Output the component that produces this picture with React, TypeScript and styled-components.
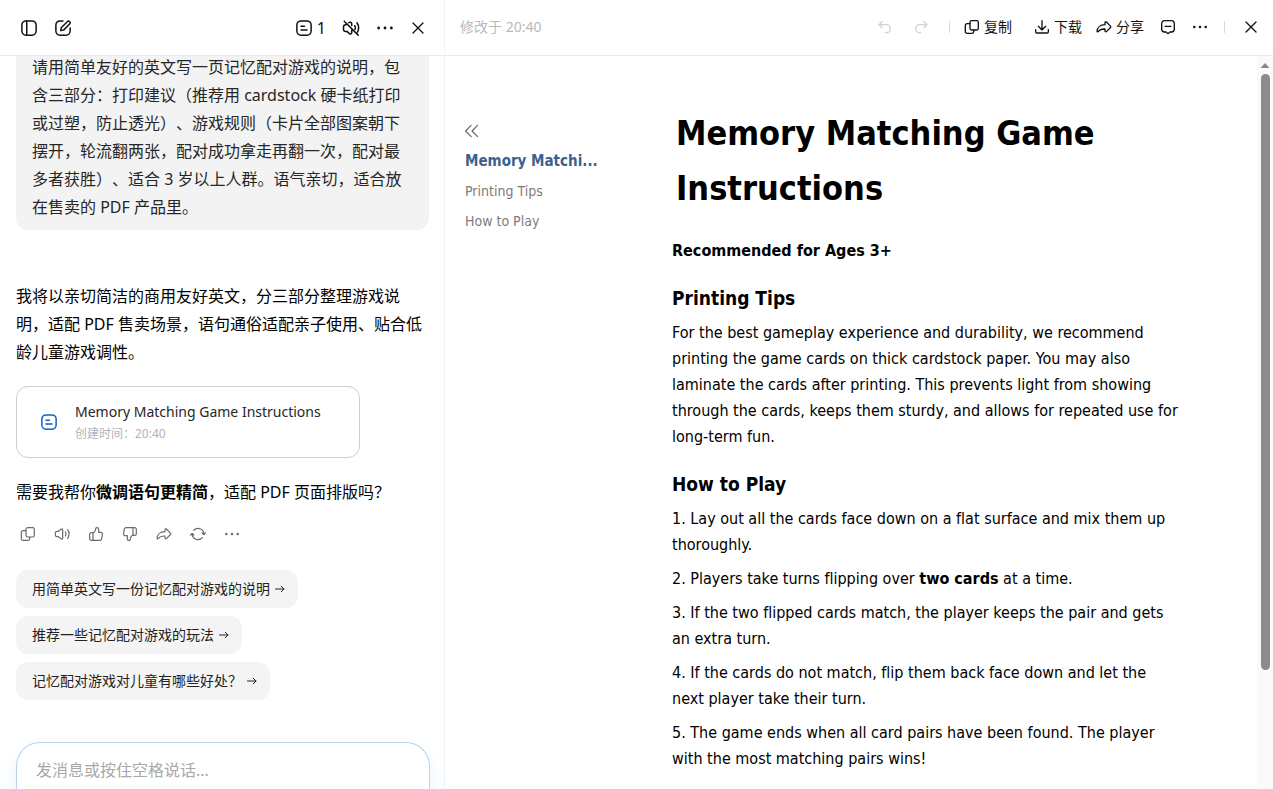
import React from "react";
import styled, { createGlobalStyle, css } from "styled-components";

const GlobalStyle = createGlobalStyle`
  * { box-sizing: border-box; }
  body { margin: 0; background: #fff; overflow: hidden; }
  button { font: inherit; color: inherit; background: none; border: 0; padding: 0; cursor: pointer; }
  h1, h2, p, ol, ul { margin: 0; padding: 0; }
`;

const uiFont = `"Noto Sans", "Noto Sans CJK SC", sans-serif`;
const docFont = `"DejaVu Sans Condensed", "DejaVu Sans", "Noto Sans CJK SC", sans-serif`;

const Page = styled.div`
  display: flex;
  height: 100vh;
  font-family: ${uiFont};
  color: #000;
  text-spacing-trim: space-all;
`;

const ChatPanel = styled.section`
  display: flex;
  flex-direction: column;
  flex: 444 1 0;
  min-width: 0;
  border-right: 1px solid #f2f2f2;
`;

const DocPanel = styled.section`
  display: flex;
  flex-direction: column;
  flex: 828 1 0;
  min-width: 0;
`;

const Bar = styled.header`
  display: flex;
  align-items: center;
  justify-content: space-between;
  flex: none;
  height: 56px;
  border-bottom: 1px solid #e9e9e9;
`;

const ChatBar = styled(Bar)`
  padding: 0 18px 0 20px;
`;

const DocBar = styled(Bar)`
  padding: 0 14px 2px 15px;
`;

const Group = styled.div<{ $gap: number }>`
  display: flex;
  align-items: center;
  gap: ${(p) => p.$gap}px;
`;

const IconButton = styled.button<{ $muted?: boolean }>`
  display: inline-flex;
  align-items: center;
  gap: 4px;
  color: #111;
  white-space: nowrap;
  ${(p) => p.$muted && css`color: #d2d2d2;`}
`;

const CountButton = styled(IconButton)`
  font-size: 16px;
`;

const TextButton = styled(IconButton)`
  font-size: 14px;
  line-height: 20px;
`;

const Saved = styled.span`
  font-size: 14px;
  line-height: 20px;
  color: #b9b9b9;
`;

const Separator = styled.span`
  width: 1px;
  height: 12px;
  background: #d8d8d8;
`;

const Messages = styled.div`
  display: flex;
  flex-direction: column;
  justify-content: flex-end;
  align-items: flex-start;
  flex: 1;
  min-height: 0;
  overflow: hidden;
  padding: 0 15px 42px 16px;
  font-size: 16px;
  line-height: 28px;
`;

const Bubble = styled.p`
  flex: none;
  margin-bottom: 52px;
  padding: 9px 16px;
  border-radius: 12px;
  background: #f3f3f3;
  color: #262626;
`;

const Reply = styled.p`
  flex: none;
`;

const FileCard = styled.button`
  display: flex;
  align-items: center;
  gap: 17px;
  flex: none;
  width: 344px;
  max-width: 100%;
  height: 72px;
  margin: 20px 0;
  padding: 0 23px;
  border: 1px solid #cfcfcf;
  border-radius: 12px;
  text-align: left;
  color: #0f62c0;
`;

const FileText = styled.span`
  display: flex;
  flex-direction: column;
`;

const FileName = styled.span`
  font-size: 14px;
  line-height: 24px;
  color: #262626;
`;

const FileTime = styled.span`
  font-size: 12px;
  line-height: 20px;
  color: #b3b3b3;
`;

const Actions = styled.div`
  display: flex;
  flex: none;
  gap: 18px;
  margin: 20px 0 28px 4px;
`;

const ActionButton = styled(IconButton)`
  color: #6b6b6b;
`;

const Suggestions = styled.ul`
  display: flex;
  flex-direction: column;
  align-items: flex-start;
  flex: none;
  gap: 8px;
  list-style: none;
`;

const Suggestion = styled.button`
  display: flex;
  align-items: center;
  gap: 4px;
  height: 38px;
  padding: 0 12px 0 16px;
  border-radius: 12px;
  background: #f4f4f4;
  color: #222;
  font-size: 14px;
  line-height: 20px;
`;

const Composer = styled.div`
  flex: none;
  margin: 0 14px 0 16px;
  height: 47px;
  padding: 13px 19px 0;
  border: 1px solid #b9d3ec;
  border-bottom: 0;
  border-radius: 24px 24px 0 0;
  box-shadow: 0 12px 20px rgba(120, 190, 250, 0.2);
`;

const ComposerInput = styled.input`
  display: block;
  width: 100%;
  height: 28px;
  padding: 0;
  border: 0;
  outline: 0;
  background: transparent;
  font-family: inherit;
  font-size: 16px;
  &::placeholder { color: #a8a8a8; opacity: 1; }
`;

const DocBody = styled.div`
  display: flex;
  flex: 1;
  min-height: 0;
  font-family: ${docFont};
  font-variant-ligatures: none;
`;

const Outline = styled.nav`
  flex: none;
  width: 227px;
  padding: 66px 60px 0 20px;
`;

const Collapse = styled.button`
  display: block;
  height: 20px;
  margin-bottom: 4px;
  color: #666;
`;

const OutlineLink = styled.a<{ $active?: boolean }>`
  display: block;
  white-space: nowrap;
  text-decoration: none;
  font-size: ${(p) => (p.$active ? 15 : 14)}px;
  line-height: 30px;
  color: ${(p) => (p.$active ? "#3b618c" : "#7d7d7d")};
  font-weight: ${(p) => (p.$active ? 700 : 400)};
`;

const Article = styled.article`
  flex: 0 1 510px;
  min-width: 0;
  padding-top: 50px;
  overflow: hidden;
  font-size: 16px;
  line-height: 26px;
`;

const Title = styled.h1`
  padding-left: 4px;
  margin-bottom: 22px;
  font-size: 34px;
  line-height: 55px;
`;

const Heading = styled.h2`
  margin: 21px 0 9px;
  font-size: 19px;
  line-height: 26px;
`;

const Steps = styled.ol`
  display: flex;
  flex-direction: column;
  gap: 8px;
  list-style: none;
`;

const ScrollTrack = styled.div`
  display: flex;
  flex-direction: column;
  align-items: center;
  flex: none;
  width: 16px;
  margin-left: auto;
  padding: 6px 0 119px;
  gap: 5px;
  background: #fafafa;
  color: #888;
`;

const ScrollThumb = styled.div`
  flex: 1;
  width: 9px;
  border-radius: 5px;
  background: #8b8b8b;
`;

const icons = {
  sidebar: (
    <>
      <rect x="2.5" y="2.5" width="19" height="19" rx="5.5" />
      <path d="M9 2.5v19" />
    </>
  ),
  edit: (
    <>
      <path d="M12 2.5H8A5.500 5.500 0 0 0 2.500 8v8A5.500 5.500 0 0 0 8 21.500h8a5.500 5.500 0 0 0 5.500-5.500v-4" />
      <path d="M9 15.500l.6-3.900 8.400-8.300a1.700 1.700 0 0 1 2.500 0l.6.6a1.700 1.700 0 0 1 0 2.500l-8.300 8.400z" />
    </>
  ),
  doc: (
    <>
      <rect x="2.500" y="2.500" width="19" height="19" rx="5.500" />
      <path d="M8 9.500h4.500M8 14.500h8" />
    </>
  ),
  mute: (
    <path d="M5.500 7.500H5A3 3 0 0 0 2 10.500v3A3 3 0 0 0 5 16.500h1.500l3.500 3c1.200 1 3 .3 3-1.500v-3M9 5c1.500-1.300 4-1 4 1.200v2.300M17 9c.9 1.500.9 3.500.3 5M20 5c2.400 3.600 2.600 8.800.6 12.500M3 3l18.500 18.500" />
  ),
  speaker: (
    <path d="M13 5.500v13c0 1-1 1.500-1.800.9L6.500 16H4.500A2.500 2.500 0 0 1 2 13.500v-3A2.500 2.500 0 0 1 4.500 8h2l4.700-3.400c.8-.6 1.800-.1 1.800.9zM17 9c1.200 1.800 1.200 4.200 0 6M20.500 5.500c2.400 3.800 2.400 9.200 0 13" />
  ),
  dots: (
    <g fill="currentColor" stroke="none">
      <circle cx="3.500" cy="12" r="1.900" />
      <circle cx="12" cy="12" r="1.900" />
      <circle cx="20.500" cy="12" r="1.900" />
    </g>
  ),
  close: <path d="M4.500 4.500l15 15M19.500 4.500l-15 15" />,
  undo: <path d="M7.500 4L3 8.500 7.500 13M3.500 8.500H14a6 6 0 0 1 0 12h-1.500" />,
  redo: <path d="M16.500 4L21 8.500 16.500 13M20.500 8.500H10a6 6 0 0 0 0 12h1.500" />,
  copy: (
    <>
      <rect x="9" y="2.500" width="12.500" height="14" rx="2.500" />
      <path d="M9 7H4.500A2.500 2.500 0 0 0 2 9.500v9.500A2.500 2.500 0 0 0 4.500 21.500h7.500a2.500 2.500 0 0 0 2.500-2.500v-2.500" />
    </>
  ),
  download: <path d="M12 2.500v13.500M6.500 11l5.500 5.500 5.500-5.500M2.500 16v3a2 2 0 0 0 2 2h15a2 2 0 0 0 2-2v-3" />,
  share: (
    <path d="M13.500 5.500c0-1.200 1.200-1.800 2.100-1l6.200 6.200c.5.600.5 1.400 0 2l-6.200 6.200c-.9.800-2.100.2-2.100-1V15c-4.500-.2-8 1-10.300 4-.5.600-1.500.3-1.500-.5C1.700 13 6 8.700 13.500 8.500z" />
  ),
  comment: (
    <>
      <path d="M7 2.500h10a4.500 4.500 0 0 1 4.500 4.500v8A4.500 4.500 0 0 1 17 19.500h-2L12 22l-3-2.500H7A4.500 4.500 0 0 1 2.500 15V7A4.500 4.500 0 0 1 7 2.500z" />
      <path d="M7.500 11h9" />
    </>
  ),
  like: (
    <path d="M7.500 10v11.500M5 10h3.500c2-1.500 3-3.500 3.200-6 .2-2.500 4.300-2.300 4.300 1V9.500h3a2.700 2.700 0 0 1 2.700 3.200l-1.200 6.500a2.800 2.800 0 0 1-2.700 2.300H5A2.500 2.500 0 0 1 2.500 19v-6.500A2.500 2.500 0 0 1 5 10z" />
  ),
  dislike: (
    <path d="M16.500 14V2.500M19 14h-3.500c-2 1.500-3 3.500-3.200 6-.2 2.500-4.300 2.300-4.300-1v-4.500H5a2.700 2.700 0 0 1-2.700-3.200l1.200-6.500A2.800 2.800 0 0 1 6.200 2.500H19A2.500 2.500 0 0 1 21.500 5v6.500A2.500 2.500 0 0 1 19 14z" />
  ),
  refresh: (
    <path d="M5.500 6.500a8.700 8.700 0 0 1 15.200 6M18.200 10.500l2.500 2.500 2.300-2.500M18.500 17.500a8.700 8.700 0 0 1-15.200-6M5.800 13.500L3.300 11 1 13.500" />
  ),
  arrow: <path d="M3 12h17M14.500 6.500L20 12l-5.500 5.500" />,
  collapse: <path d="M10.500 2.500L1 12l9.500 9.500M21.500 2.500L12 12l9.500 9.500" />,
};

type IconName = keyof typeof icons;

function Icon({ name, size = 18, weight = 2 }: { name: IconName; size?: number; weight?: number }) {
  return (
    <svg
      width={size}
      height={size}
      viewBox="0 0 24 24"
      fill="none"
      stroke="currentColor"
      strokeWidth={weight}
      strokeLinecap="round"
      strokeLinejoin="round"
      aria-hidden="true"
    >
      {icons[name]}
    </svg>
  );
}

const actions: { name: IconName; label: string }[] = [
  { name: "copy", label: "复制" },
  { name: "speaker", label: "朗读" },
  { name: "like", label: "喜欢" },
  { name: "dislike", label: "不喜欢" },
  { name: "share", label: "分享" },
  { name: "refresh", label: "重新生成" },
  { name: "dots", label: "更多" },
];

const suggestions = [
  "用简单英文写一份记忆配对游戏的说明",
  "推荐一些记忆配对游戏的玩法",
  "记忆配对游戏对儿童有哪些好处？",
];

export default function App() {
  return (
    <Page lang="zh-CN">
      <GlobalStyle />
      <ChatPanel>
        <ChatBar>
          <Group $gap={16}>
            <IconButton aria-label="侧边栏"><Icon name="sidebar" /></IconButton>
            <IconButton aria-label="新对话"><Icon name="edit" /></IconButton>
          </Group>
          <Group $gap={16}>
            <CountButton><Icon name="doc" />1</CountButton>
            <IconButton aria-label="静音"><Icon name="mute" /></IconButton>
            <IconButton aria-label="更多"><Icon name="dots" /></IconButton>
            <IconButton aria-label="关闭"><Icon name="close" size={16} /></IconButton>
          </Group>
        </ChatBar>
        <Messages>
          <Bubble>
            请用简单友好的英文写一页记忆配对游戏的说明，包含三部分：打印建议（推荐用 cardstock 硬卡纸打印或过塑，防止透光）、游戏规则（卡片全部图案朝下摆开，轮流翻两张，配对成功拿走再翻一次，配对最多者获胜）、适合 3 岁以上人群。语气亲切，适合放在售卖的 PDF 产品里。
          </Bubble>
          <Reply>
            我将以亲切简洁的商用友好英文，分三部分整理游戏说明，适配 PDF 售卖场景，语句通俗适配亲子使用、贴合低龄儿童游戏调性。
          </Reply>
          <FileCard>
            <Icon name="doc" />
            <FileText>
              <FileName>Memory Matching Game Instructions</FileName>
              <FileTime>创建时间：20:40</FileTime>
            </FileText>
          </FileCard>
          <Reply>
            需要我帮你<b>微调语句更精简</b>，适配 PDF 页面排版吗？
          </Reply>
          <Actions>
            {actions.map((a) => (
              <ActionButton key={a.name} aria-label={a.label}>
                <Icon name={a.name} size={16} weight={1.8} />
              </ActionButton>
            ))}
          </Actions>
          <Suggestions>
            {suggestions.map((s) => (
              <li key={s}>
                <Suggestion>{s}<Icon name="arrow" size={12} /></Suggestion>
              </li>
            ))}
          </Suggestions>
        </Messages>
        <Composer>
          <ComposerInput aria-label="消息" placeholder="发消息或按住空格说话..." />
        </Composer>
      </ChatPanel>

      <DocPanel>
        <DocBar>
          <Saved>修改于 20:40</Saved>
          <Group $gap={18}>
            <Group $gap={14}>
              <Group $gap={20}>
                <IconButton $muted aria-label="撤销"><Icon name="undo" size={16} /></IconButton>
                <IconButton $muted aria-label="重做"><Icon name="redo" size={16} /></IconButton>
                <Separator />
              </Group>
              <Group $gap={22}>
                <TextButton><Icon name="copy" size={16} />复制</TextButton>
                <Group $gap={14}>
                  <TextButton><Icon name="download" size={16} />下载</TextButton>
                  <Group $gap={16}>
                    <TextButton><Icon name="share" size={16} />分享</TextButton>
                    <IconButton aria-label="评论"><Icon name="comment" size={16} /></IconButton>
                    <IconButton aria-label="更多"><Icon name="dots" size={16} /></IconButton>
                    <Separator />
                  </Group>
                </Group>
              </Group>
            </Group>
            <IconButton aria-label="关闭文档"><Icon name="close" size={16} /></IconButton>
          </Group>
        </DocBar>
        <DocBody>
          <Outline aria-label="目录">
            <Collapse aria-label="收起目录"><Icon name="collapse" size={14} /></Collapse>
            <OutlineLink $active href="#title">Memory Matchi...</OutlineLink>
            <OutlineLink href="#printing">Printing Tips</OutlineLink>
            <OutlineLink href="#play">How to Play</OutlineLink>
          </Outline>
          <Article lang="en">
            <Title id="title">Memory Matching Game Instructions</Title>
            <p><b>Recommended for Ages 3+</b></p>
            <Heading id="printing">Printing Tips</Heading>
            <p>
              For the best gameplay experience and durability, we recommend printing the game cards on thick
              cardstock paper. You may also laminate the cards after printing. This prevents light from showing
              through the cards, keeps them sturdy, and allows for repeated use for long-term fun.
            </p>
            <Heading id="play">How to Play</Heading>
            <Steps>
              <li>1. Lay out all the cards face down on a flat surface and mix them up thoroughly.</li>
              <li>2. Players take turns flipping over <b>two cards</b> at a time.</li>
              <li>3. If the two flipped cards match, the player keeps the pair and gets an extra turn.</li>
              <li>4. If the cards do not match, flip them back face down and let the next player take their turn.</li>
              <li>5. The game ends when all card pairs have been found. The player with the most matching pairs wins!</li>
            </Steps>
          </Article>
          <ScrollTrack>
            <svg width="10" height="7" viewBox="0 0 10 7" aria-hidden="true">
              <path d="M5 1l4.500 5h-9z" fill="currentColor" />
            </svg>
            <ScrollThumb />
          </ScrollTrack>
        </DocBody>
      </DocPanel>
    </Page>
  );
}
